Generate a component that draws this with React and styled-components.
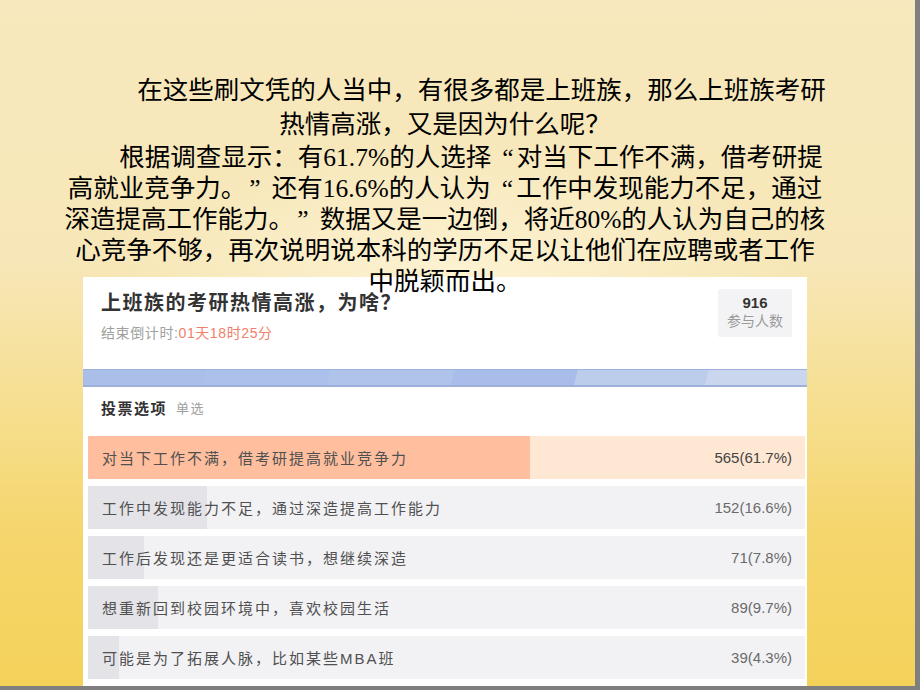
import React from "react";
import styled, { createGlobalStyle } from "styled-components";

const Global = createGlobalStyle`
  html, body { margin: 0; padding: 0; background: #7f7f7f; }
  body { font-family: "Noto Sans CJK SC", sans-serif; }
`;

const Slide = styled.div`
  width: 915px;
  height: 686px;
  overflow: hidden;
  box-sizing: border-box;
  padding: 74px 80px 0 55px;
  display: flex;
  flex-direction: column;
  align-items: center;
  background:
    radial-gradient(ellipse 38% 22% at 50% 42%, rgba(255, 247, 222, 0.75), rgba(255, 247, 222, 0) 100%),
    linear-gradient(to bottom, #f7e8bd 0%, #f7e7b8 38%, #f6df92 58%, #f5d66c 78%, #f4d25a 100%);
`;

const TextBlock = styled.div`
  position: relative;
  z-index: 1;
  width: 100%;
  text-align: center;
  color: #000;
  font-family: "Liberation Serif", "Noto Sans CJK SC", serif;
  font-size: 25.5px;
`;

const Line = styled.div`
  height: ${(p) => p.$lh}px;
  line-height: ${(p) => p.$lh}px;
  white-space: nowrap;
  text-indent: ${(p) => p.$indent || 0}px;
`;

const Quote = styled.span`
  display: inline-block;
  width: 1em;
  text-indent: 0;
  text-align: ${(p) => (p.$open ? "right" : "left")};
  padding: ${(p) => (p.$open ? "0 3px 0 0" : "0 0 0 3px")};
  box-sizing: border-box;
  font-family: "Liberation Serif", serif;
`;

const Card = styled.div`
  flex-shrink: 0;
  width: 724px;
  margin-top: -20px;
  background: #fff;
  display: flex;
  flex-direction: column;
  font-family: "Liberation Sans", "Noto Sans CJK SC", sans-serif;
`;

const Header = styled.div`
  height: 92px;
  box-sizing: border-box;
  padding: 12px 15px 0 18px;
  display: flex;
  justify-content: space-between;
  align-items: flex-start;
`;

const TitleCol = styled.div`
  display: flex;
  flex-direction: column;
`;

const Title = styled.div`
  font-size: 20px;
  line-height: 28px;
  font-weight: 700;
  letter-spacing: 1.5px;
  color: #333;
`;

const Countdown = styled.div`
  margin-top: 6px;
  font-size: 14px;
  line-height: 20px;
  letter-spacing: 0.6px;
  color: #a0a0a0;
`;

const Remain = styled.span`
  color: #f0806a;
`;

const CountBox = styled.div`
  width: 74px;
  height: 48px;
  box-sizing: border-box;
  padding-top: 5px;
  background: #f3f3f5;
  border-radius: 2px;
  text-align: center;
`;

const CountNum = styled.div`
  font-size: 15px;
  line-height: 18px;
  font-weight: 700;
  color: #333;
`;

const CountLabel = styled.div`
  font-size: 14px;
  line-height: 18px;
  color: #9a9a9a;
`;

const Band = styled.div`
  height: 18px;
  box-sizing: border-box;
  border-top: 1px solid #9db1dc;
  border-bottom: 2px solid #9cb0da;
  background: linear-gradient(
    104deg,
    #a9bee9 0 17%,
    #abc0ea 17% 34%,
    #b0c4eb 34% 51%,
    #a8bde9 51% 68%,
    #bccdec 68% 86%,
    #c9d6ee 86% 100%
  );
`;

const VoteHead = styled.div`
  height: 40px;
  padding-left: 18px;
  display: flex;
  align-items: center;
  gap: 9px;
`;

const VoteTitle = styled.span`
  font-size: 15px;
  font-weight: 700;
  letter-spacing: 1.5px;
  color: #333;
`;

const VoteType = styled.span`
  font-size: 13px;
  letter-spacing: 1.5px;
  color: #a0a0a0;
`;

const List = styled.div`
  display: flex;
  flex-direction: column;
  gap: 7px;
  padding: 9px 2px 24px 5px;
`;

const Row = styled.div`
  height: 43px;
  box-sizing: border-box;
  padding: 0 13px 0 14px;
  display: flex;
  align-items: center;
  justify-content: space-between;
  background: linear-gradient(
    to right,
    ${(p) => p.$bar} 0 ${(p) => p.$pct}%,
    ${(p) => p.$track} ${(p) => p.$pct}% 100%
  );
`;

const RowText = styled.span`
  font-size: 15px;
  letter-spacing: 2px;
  color: #505050;
  white-space: nowrap;
`;

const RowCount = styled.span`
  font-size: 15px;
  color: ${(p) => (p.$top ? "#444" : "#6a6a6a")};
`;

const options = [
  { text: "对当下工作不满，借考研提高就业竞争力", count: 565, pct: 61.7, top: true },
  { text: "工作中发现能力不足，通过深造提高工作能力", count: 152, pct: 16.6 },
  { text: "工作后发现还是更适合读书，想继续深造", count: 71, pct: 7.8 },
  { text: "想重新回到校园环境中，喜欢校园生活", count: 89, pct: 9.7 },
  { text: "可能是为了拓展人脉，比如某些MBA班", count: 39, pct: 4.3 },
];

export default function App() {
  return (
    <>
      <Global />
      <Slide>
        <TextBlock>
          <Line $lh={34} $indent={73}>在这些刷文凭的人当中，有很多都是上班族，那么上班族考研</Line>
          <Line $lh={34}>热情高涨，又是因为什么呢？</Line>
          <Line $lh={31} $indent={52}>
            根据调查显示：有61.7%的人选择<Quote $open>“</Quote>对当下工作不满，借考研提
          </Line>
          <Line $lh={31}>
            高就业竞争力。<Quote>”</Quote>还有16.6%的人认为<Quote $open>“</Quote>工作中发现能力不足，通过
          </Line>
          <Line $lh={31}>
            深造提高工作能力。<Quote>”</Quote>数据又是一边倒，将近80%的人认为自己的核
          </Line>
          <Line $lh={31}>心竞争不够，再次说明说本科的学历不足以让他们在应聘或者工作</Line>
          <Line $lh={31}>中脱颖而出。</Line>
        </TextBlock>
        <Card>
          <Header>
            <TitleCol>
              <Title>上班族的考研热情高涨，为啥？</Title>
              <Countdown>
                结束倒计时:<Remain>01天18时25分</Remain>
              </Countdown>
            </TitleCol>
            <CountBox>
              <CountNum>916</CountNum>
              <CountLabel>参与人数</CountLabel>
            </CountBox>
          </Header>
          <Band />
          <VoteHead>
            <VoteTitle>投票选项</VoteTitle>
            <VoteType>单选</VoteType>
          </VoteHead>
          <List>
            {options.map((o) => (
              <Row
                key={o.text}
                $pct={o.pct}
                $bar={o.top ? "#ffbf9e" : "#e3e3e8"}
                $track={o.top ? "#fee8d3" : "#f2f2f5"}
              >
                <RowText>{o.text}</RowText>
                <RowCount $top={o.top}>
                  {o.count}({o.pct}%)
                </RowCount>
              </Row>
            ))}
          </List>
        </Card>
      </Slide>
    </>
  );
}
